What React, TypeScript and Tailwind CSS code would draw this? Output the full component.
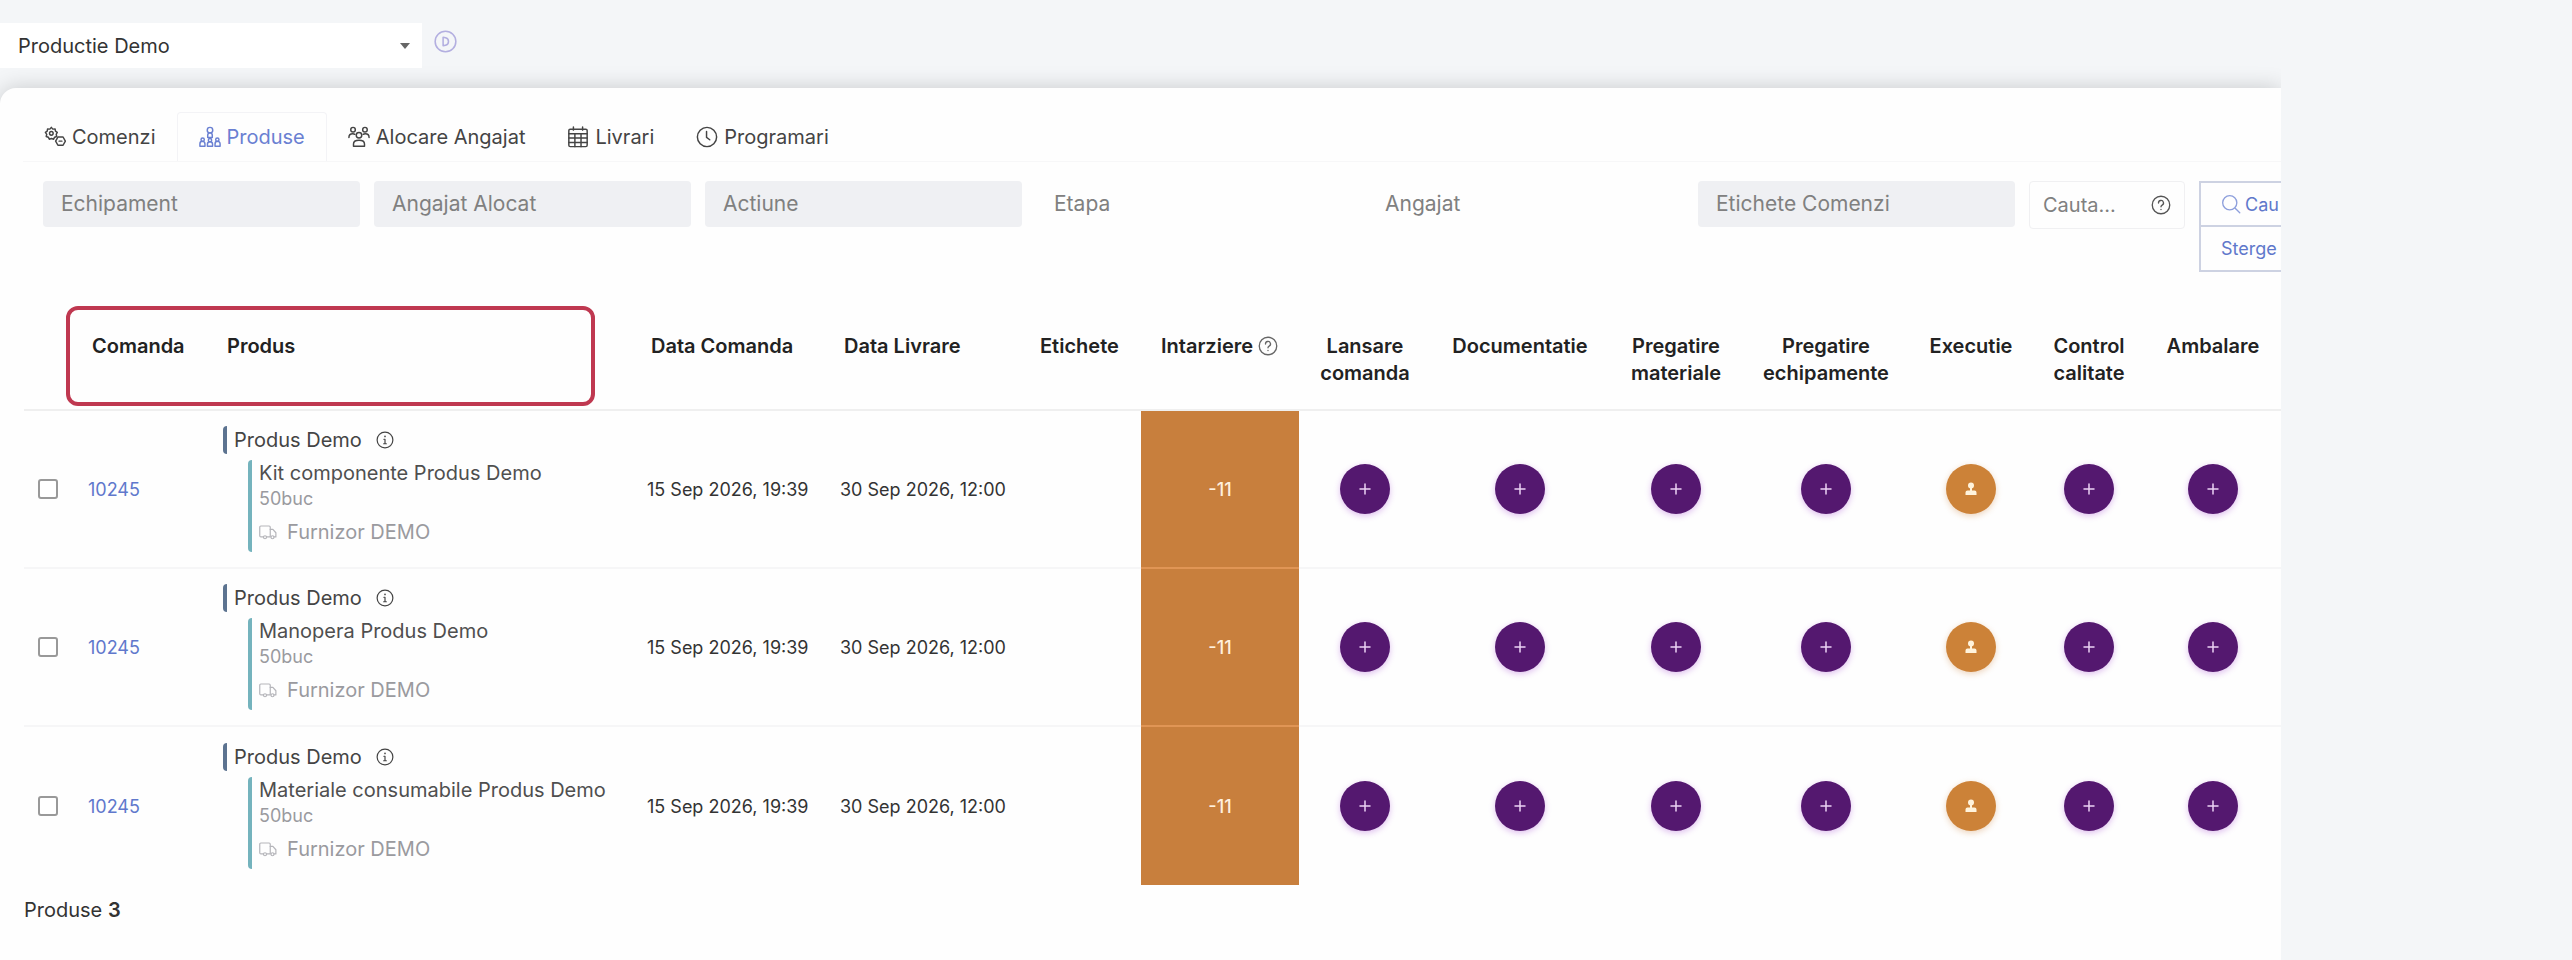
import type { ReactNode } from 'react';

type IconProps = { className?: string };

function Icon({ className, children }: { className?: string; children: ReactNode }) {
  return (
    <svg
      viewBox="0 0 24 24"
      fill="none"
      stroke="currentColor"
      strokeWidth="1.6"
      strokeLinecap="round"
      strokeLinejoin="round"
      aria-hidden="true"
      className={className}
    >
      {children}
    </svg>
  );
}

const HelpIcon = ({ className }: IconProps) => (
  <Icon className={className}>
    <circle cx="12" cy="12" r="10.5" />
    <path d="M9 9.6a3 3 0 1 1 4.4 2.6c-.9.5-1.4 1-1.4 1.9" />
    <path d="M12 17.2v.3" />
  </Icon>
);

const InfoIcon = ({ className }: IconProps) => (
  <Icon className={className}>
    <circle cx="12" cy="12" r="10.5" />
    <path d="M10.5 11H12v6m-1.8 0h3.6" />
    <path d="M12 7v.4" strokeWidth="2.2" />
  </Icon>
);

const PlayIcon = ({ className }: IconProps) => (
  <Icon className={className}>
    <circle cx="12" cy="12" r="10.8" />
    <path d="M9.5 7.5v9l2.5-.6a4 4 0 0 0 0-7.8z" />
  </Icon>
);

const ClockIcon = ({ className }: IconProps) => (
  <Icon className={className}>
    <circle cx="12" cy="12" r="10.5" />
    <path d="M11.5 6v6.5l3.5 2.5" />
  </Icon>
);

const SearchIcon = ({ className }: IconProps) => (
  <Icon className={className}>
    <circle cx="10.5" cy="10.5" r="8.5" />
    <path d="m17 17 5.5 5.5" />
  </Icon>
);

const GearsIcon = ({ className }: IconProps) => (
  <Icon className={className}>
    <path d="M8 1.5l1.6 1.9 2.5-.2.4 2.4 2 1.4-1.2 2.1.6 2.3-2.3.8-1.1 2.2-2.4-.7-2.3.7-1.1-2.2-2.3-.8.6-2.3L1.5 7l2-1.4.4-2.4 2.5.2z" />
    <circle cx="8" cy="8" r="2" />
    <path d="M15.2 12h5.6l2.5 4.500-2.500 4.500h-5.600l-2.500-4.500z" />
    <path d="M16.5 16.5h3" />
  </Icon>
);

const ProductsIcon = ({ className }: IconProps) => (
  <Icon className={className}>
    <circle cx="12" cy="4.5" r="3" />
    <path d="M9.5 12.5V10a2.500 2.500 0 0 1 5 0v2.500z" />
    <circle cx="4" cy="15" r="1.8" />
    <circle cx="12" cy="15.5" r="1.8" />
    <circle cx="20" cy="15" r="1.8" />
    <path d="M1 22v-2.500a2.500 2.500 0 0 1 5.500 0V22zM9.200 22v-2a2.800 2.800 0 0 1 5.600 0v2zM17.500 22v-2.500a2.500 2.500 0 0 1 5.500 0V22z" />
  </Icon>
);

const TeamIcon = ({ className }: IconProps) => (
  <Icon className={className}>
    <circle cx="5.5" cy="4" r="2.5" />
    <circle cx="18.5" cy="4" r="2.5" />
    <circle cx="12" cy="10" r="3" />
    <path d="M1 12.500c0-2.500 1.800-4 4.200-4 1 0 1.700.2 2.300.6M23 12.500c0-2.500-1.800-4-4.200-4-1 0-1.700.2-2.300.6" />
    <path d="M6 22v-2.500c0-2.500 2-4 6-4s6 1.500 6 4V22z" />
  </Icon>
);

const CalendarIcon = ({ className }: IconProps) => (
  <Icon className={className}>
    <rect x="2" y="3.5" width="20" height="19" rx="1.5" />
    <path d="M2 8.500h20M2 13.200h20M2 17.900h20M8.600 8.500v14M15.300 8.500v14M7 1v3.500M17 1v3.500" />
  </Icon>
);

const TruckIcon = ({ className }: IconProps) => (
  <Icon className={className}>
    <path d="M6 18.500H2.500A1.500 1.500 0 0 1 1 17V5.500A1.500 1.500 0 0 1 2.500 4h11A1.500 1.500 0 0 1 15 5.500v13h-5" />
    <path d="M15 8.500h3.500L22.500 13v5.500H20" />
    <circle cx="8" cy="19" r="2" />
    <circle cx="18" cy="19" r="2" />
  </Icon>
);

const PlusIcon = ({ className }: IconProps) => (
  <Icon className={className}>
    <path d="M12 2v20M2 12h20" strokeWidth="3" />
  </Icon>
);

const PersonIcon = ({ className }: IconProps) => (
  <svg viewBox="0 0 12 14" fill="currentColor" aria-hidden="true" className={className}>
    <circle cx="6" cy="3.5" r="3" />
    <path d="M5 6h2v3H5zM0.500 13V10.500a2 2 0 0 1 2-2h7a2 2 0 0 1 2 2V13z" />
  </svg>
);

const tabs = [
  { label: 'Comenzi', Icon: GearsIcon },
  { label: 'Produse', Icon: ProductsIcon, active: true },
  { label: 'Alocare Angajat', Icon: TeamIcon },
  { label: 'Livrari', Icon: CalendarIcon },
  { label: 'Programari', Icon: ClockIcon },
];

const filters = [
  { label: 'Echipament', filled: true },
  { label: 'Angajat Alocat', filled: true },
  { label: 'Actiune', filled: true },
  { label: 'Etapa', filled: false },
  { label: 'Angajat', filled: false },
  { label: 'Etichete Comenzi', filled: true },
];

const steps = [
  { label: 'Lansare comanda', width: 'w-[132px]' },
  { label: 'Documentatie', width: 'w-[178px]' },
  { label: 'Pregatire materiale', width: 'w-[134px]' },
  { label: 'Pregatire echipamente', width: 'w-[166px]' },
  { label: 'Executie', width: 'w-[124px]', assigned: true },
  { label: 'Control calitate', width: 'w-[112px]' },
  { label: 'Ambalare', width: 'w-[136px]' },
];

const rows = [
  { id: 1, name: 'Kit componente Produs Demo' },
  { id: 2, name: 'Manopera Produs Demo' },
  { id: 3, name: 'Materiale consumabile Produs Demo' },
];

function TopBar() {
  return (
    <header className="relative z-10 flex items-start gap-3 pt-[23px]">
      <div className="relative w-[422px]">
        <select
          aria-label="Productie"
          className="h-[45px] w-full appearance-none bg-white pl-[18px] text-[20px] text-[#333]"
        >
          <option>Productie Demo</option>
        </select>
        <span className="pointer-events-none absolute right-3 top-5 border-x-[5px] border-t-[6px] border-x-transparent border-t-[#666]" />
      </div>
      <button type="button" aria-label="Porneste" className="mt-[7px] text-[#b3afe0]">
        <PlayIcon className="size-[23px]" />
      </button>
    </header>
  );
}

function Tabs() {
  return (
    <nav className="ml-[23px] flex h-[50px] border-b border-[#f7f7f8] text-[20px]">
      {tabs.map(({ label, Icon: TabIcon, active }) => (
        <button
          key={label}
          type="button"
          className={
            active
              ? 'flex items-center gap-1.5 rounded-t border border-b-0 border-[#f3f3f6] px-[21px] text-[#6a80d2]'
              : 'flex items-center gap-1.5 px-[21px] text-[#444]'
          }
        >
          <TabIcon className="size-[22px]" />
          {label}
        </button>
      ))}
    </nav>
  );
}

function Filters() {
  return (
    <div className="flex items-start gap-[14px] pl-[43px] text-[21px]">
      {filters.map((f) => (
        <select
          key={f.label}
          aria-label={f.label}
          className={
            f.filled
              ? 'h-[46px] w-[317px] shrink-0 appearance-none rounded bg-[#eff0f3] pl-[18px] text-[#808080]'
              : 'h-[46px] w-[317px] shrink-0 appearance-none pl-[18px] text-[#808080]'
          }
        >
          <option>{f.label}</option>
        </select>
      ))}
      <div className="flex h-[48px] w-[156px] shrink-0 items-center justify-between rounded border border-[#f0f0f2] px-[13px]">
        <input
          aria-label="Cauta"
          placeholder="Cauta..."
          className="w-[80px] text-[20px] text-[#555] outline-none placeholder:text-[#808080]"
        />
        <HelpIcon className="size-5 text-[#555]" />
      </div>
      <div className="flex w-[150px] shrink-0 flex-col text-[18px] text-[#5f78cb]">
        <button
          type="button"
          className="flex h-[46px] items-center gap-1 border-2 border-[#cdd2e2] pl-[20px]"
        >
          <SearchIcon className="size-5 text-[#8d9fdc]" />
          Cau
        </button>
        <button type="button" className="h-[45px] border-2 border-t-0 border-[#cdd2e2] pl-[20px] text-left">
          Sterge
        </button>
      </div>
    </div>
  );
}

function ProductCell({ name }: { name: string }) {
  return (
    <div className="pl-4">
      <div className="flex h-[28px] items-center gap-3.5 rounded-sm border-l-4 border-[#5c7390] pl-[7px] text-[20px] text-[#444]">
        Produs Demo
        <InfoIcon className="size-[18px]" />
      </div>
      <div className="ml-[25px] mt-1.5 h-[92px] rounded-sm border-l-4 border-[#74b3bd] pl-[7px]">
        <p className="whitespace-nowrap text-[20px] leading-[26px] text-[#4f4f4f]">{name}</p>
        <p className="text-[18px] leading-[26px] text-[#9a9a9f]">50buc</p>
        <p className="mt-1 flex items-center gap-2.5 text-[20px] leading-8 text-[#9a9a9f]">
          <TruckIcon className="size-[18px] text-[#b5b5ba]" />
          Furnizor DEMO
        </p>
      </div>
    </div>
  );
}

function ProductsTable() {
  return (
    <table className="w-full table-fixed border-separate border-spacing-0">
      <thead>
        <tr className="h-[78px] text-left align-top text-[20px] leading-[27px] text-[#222] [&>th]:border-b-2 [&>th]:border-[#efefef] [&>th]:font-semibold">
          <th className="w-[48px]" />
          <th className="w-[135px] pl-5">Comanda</th>
          <th className="w-[424px] pl-5">Produs</th>
          <th className="w-[193px] pl-5">Data Comanda</th>
          <th className="w-[196px] pl-5">Data Livrare</th>
          <th className="w-[121px] pl-5">Etichete</th>
          <th className="w-[158px] whitespace-nowrap pl-5">
            Intarziere <HelpIcon className="inline size-5 align-[-3px] text-[#666]" />
          </th>
          {steps.map((s) => (
            <th key={s.label} className={`${s.width} px-2 text-center`}>
              {s.label}
            </th>
          ))}
        </tr>
      </thead>
      <tbody>
        {rows.map((row) => (
          <tr
            key={row.id}
            className="h-[158px] text-[18px] text-[#333] [&:not(:last-child)>td]:border-b-2 [&>td]:border-[#f6f6f7]"
          >
            <td className="pl-[14px]">
              <input
                type="checkbox"
                aria-label={`Selecteaza ${row.name}`}
                className="block size-5 appearance-none rounded-[3px] border-2 border-[#999] bg-white"
              />
            </td>
            <td className="pl-4">
              <a href="#10245" className="text-[#6078cc]">
                10245
              </a>
            </td>
            <td>
              <ProductCell name={row.name} />
            </td>
            <td className="whitespace-nowrap pl-4">15 Sep 2026, 19:39</td>
            <td className="whitespace-nowrap pl-4">30 Sep 2026, 12:00</td>
            <td />
            <td className="border-[#e09555]! bg-[#c87f3d] text-center font-medium text-[#fff0dd]">-11</td>
            {steps.map((s) => (
              <td key={s.label}>
                <button
                  type="button"
                  aria-label={s.label}
                  className={
                    s.assigned
                      ? 'mx-auto flex size-[50px] items-center justify-center rounded-full bg-[#cc8238] text-[#fff3dc] shadow-[0_2px_6px_#cc823855]'
                      : 'mx-auto flex size-[50px] items-center justify-center rounded-full bg-[#54186f] text-[#ecd2f5] shadow-[0_2px_6px_#a040d055]'
                  }
                >
                  {s.assigned ? <PersonIcon className="h-[14px] w-3" /> : <PlusIcon className="size-3" />}
                </button>
              </td>
            ))}
          </tr>
        ))}
      </tbody>
    </table>
  );
}

export default function App() {
  return (
    <div className="min-h-screen bg-[#f4f6f8] pr-[291px] font-['Inter',sans-serif]">
      <div className="flex min-h-screen flex-col overflow-hidden">
        <TopBar />
        <main className="mt-5 grow rounded-tl-2xl bg-[#fefefe] pt-6 shadow-[0_0_22px_rgba(0,0,0,0.18)]">
          <Tabs />
          <div className="mt-[19px]">
            <Filters />
          </div>
          <div className="relative mt-[61px] pl-6">
            {/* highlight around the Comanda / Produs headers */}
            <div className="pointer-events-none absolute -top-[27px] left-[66px] h-[100px] w-[529px] rounded-xl border-4 border-[#bf3850]" />
            <ProductsTable />
            <p className="mt-2.5 text-[20px] text-[#333]">
              Produse <b className="font-semibold">3</b>
            </p>
          </div>
        </main>
      </div>
    </div>
  );
}
